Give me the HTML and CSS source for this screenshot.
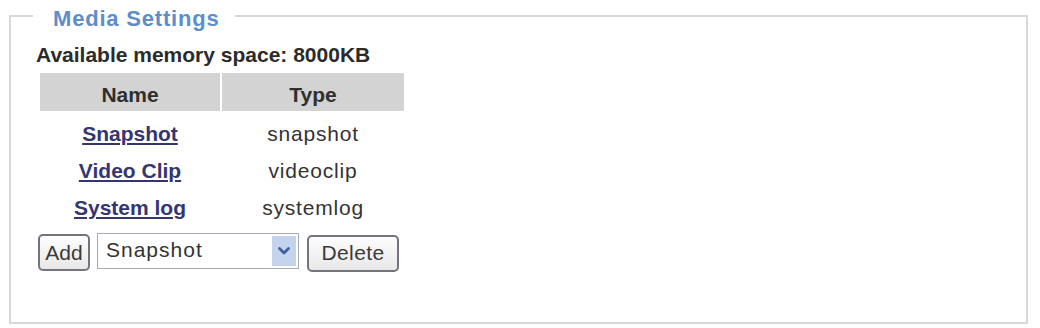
FILE: index.html
```html
<!DOCTYPE html>
<html>
<head>
<meta charset="utf-8">
<link rel="stylesheet" href="styles.css">
</head>
<body>
<fieldset class="panel">
  <legend class="panel-title">Media Settings</legend>
  <div class="memory">Available memory space: 8000KB</div>
  <table class="media-table">
    <thead>
      <tr><th class="col-name">Name</th><th class="col-type">Type</th></tr>
    </thead>
    <tbody>
      <tr><td><a href="#">Snapshot</a></td><td>snapshot</td></tr>
      <tr><td><a href="#">Video Clip</a></td><td>videoclip</td></tr>
      <tr><td><a href="#">System log</a></td><td>systemlog</td></tr>
    </tbody>
  </table>
  <div class="controls">
    <button class="btn btn-add">Add</button>
    <div class="select">
      <span class="select-value">Snapshot</span>
      <span class="select-arrow">
        <svg width="14" height="10" viewBox="0 0 14 10"><path d="M2.5 2.5 L7 7 L11.5 2.5" fill="none" stroke="#3d62a3" stroke-width="2.8" stroke-linecap="round" stroke-linejoin="round"/></svg>
      </span>
    </div>
    <button class="btn btn-delete">Delete</button>
  </div>
</fieldset>
</body>
</html>
```
FILE: styles.css
```css
html, body {
  margin: 0;
  padding: 0;
  background: #fff;
}
body {
  font-family: "Liberation Sans", Arial, sans-serif;
  color: #2d2d2d;
  width: 1040px;
  height: 328px;
  overflow: hidden;
}
.panel {
  margin: 0 0 0 9px;
  width: 1019px;
  height: 324px;
  box-sizing: border-box;
  border: 2px solid #d8d8d8;
  padding: 12px 0 0 25px;
  min-width: 0;
}
.panel-title {
  font-size: 22px;
  line-height: 24px;
  letter-spacing: 0.8px;
  font-weight: bold;
  color: #5d8dcb;
  padding: 7px 16px 0 20px;
  margin-left: -3px;
}
.memory {
  font-size: 21px;
  line-height: 24px;
  font-weight: bold;
  color: #2b2b2b;
  height: 24px;
}
.media-table {
  border-collapse: separate;
  border-spacing: 2px 0;
  margin: 6px 0 0 2px;
  font-size: 21px;
  line-height: 24px;
}
.media-table th {
  background: #d3d3d3;
  font-weight: bold;
  color: #2f2f2f;
  padding: 10px 0 4px;
}
.col-name { width: 180px; }
.col-type { width: 182px; }
.media-table td {
  text-align: center;
  padding: 11px 0 2px;
  color: #333;
  letter-spacing: 0.8px;
}
.media-table a {
  color: #35356f;
  font-weight: bold;
  letter-spacing: 0;
  text-decoration: underline;
}
.controls {
  display: flex;
  align-items: center;
  height: 38px;
  margin: 11px 0 0 2px;
}
.btn {
  font-family: "Liberation Sans", Arial, sans-serif;
  font-size: 21px;
  line-height: 24px;
  color: #3a3a3a;
  background: linear-gradient(#fdfdfd, #e8e8e8);
  border: 2px solid #74747f;
  border-radius: 5px;
  height: 37px;
  padding: 0;
  box-sizing: border-box;
}
.btn-add { width: 52px; margin-top: 1px; }
.btn-delete { width: 92px; margin: 2px 0 0 8px; letter-spacing: 0.4px; }
.select {
  width: 202px;
  height: 36px;
  margin: -2px 0 0 7px;
  box-sizing: border-box;
  border: 1px solid #a4abb6;
  display: flex;
  align-items: stretch;
  background: #fff;
}
.select-value {
  flex: 1;
  font-size: 21px;
  line-height: 24px;
  letter-spacing: 1px;
  padding: 4px 0 0 8px;
  color: #333;
}
.select-arrow {
  width: 24px;
  background: #c3d4ec;
  display: flex;
  align-items: center;
  justify-content: center;
  margin: 2px;
}
```
